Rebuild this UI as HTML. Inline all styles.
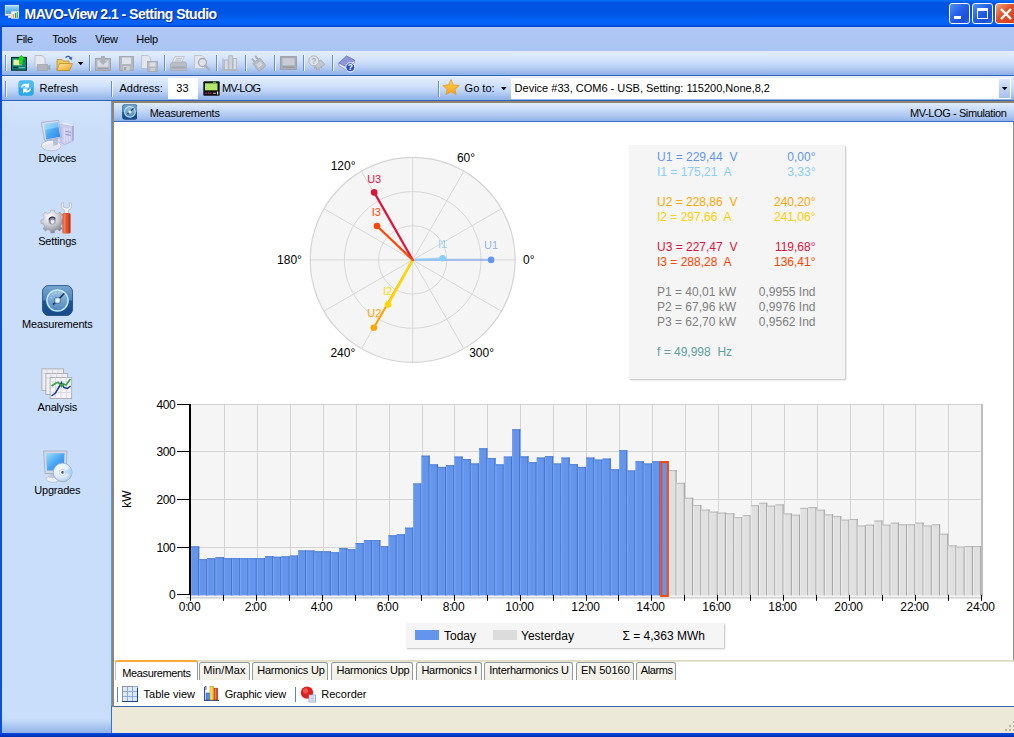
<!DOCTYPE html>
<html><head><meta charset="utf-8"><title>MAVO-View 2.1 - Setting Studio</title>
<style>
html,body{margin:0;padding:0;}
body{width:1014px;height:737px;overflow:hidden;position:relative;background:#fff;font-family:"Liberation Sans",sans-serif;font-size:11px;color:#000;}
.abs{position:absolute;}
.t{position:absolute;white-space:pre;line-height:14px;}
#title{left:0;top:0;width:1014px;height:27px;background:linear-gradient(to bottom,#0a74fa 0px,#0462ee 1.5px,#0054e3 3px,#0054e3 12px,#0059ec 16px,#0362f8 20px,#0461f6 24.5px,#0050dc 25.6px,#0040c4 27px);}
#title .cap{left:24.5px;top:5.5px;font:bold 14px "Liberation Sans",sans-serif;color:#fff;text-shadow:1px 1px 0 #0a2a8a;line-height:17px;letter-spacing:-0.53px;}
#menubar{left:0;top:27px;width:1014px;height:24px;background:linear-gradient(to bottom,#b1c9f6 0,#aac4f3 100%);}
#menubar .t{top:5px;letter-spacing:-0.3px;margin-left:0.3px}
#tb1{left:2px;top:50.9px;width:1012px;height:24.8px;background:linear-gradient(to bottom,#e2edfd 0,#dbe8fc 5px,#cfe0fa 10px,#b9d0f5 16px,#9dbcec 21px,#8eb1e8 23.8px,#3464b8 24px,#3060b0 24.8px);}
#tb2{left:2px;top:75.7px;width:1012px;height:25.3px;background:linear-gradient(to bottom,#eef5fe 0,#e2edfd 1px,#dbe8fc 5px,#cfe0fa 10px,#b9d0f5 16px,#9dbcec 21px,#8eb1e8 24px,#3464b8 24.2px,#3060b0 25.3px);}
#lborder{left:0;top:27px;width:2px;height:710px;background:#0a50e0;}
#sidebar{left:2px;top:100.7px;width:109px;height:633px;background:linear-gradient(to bottom,#d2e3fb 0,#cadefa 30px,#c9defa 618px,#a9c5f0 626px,#8fb2e8 632px);}
#sidebar .t{width:109px;text-align:center;left:0.8px;letter-spacing:-0.2px;}
#split{left:111px;top:100.7px;width:2.8px;height:606px;background:linear-gradient(to right,#6a98e0 0,#6a98e0 1.1px,#8c8672 1.1px,#8c8672 100%);}
#hdr{left:113.8px;top:102.8px;width:900.2px;height:19.4px;background:linear-gradient(to bottom,#e1ebfc 0,#cbddf8 6px,#a9c4f0 14px,#8fb1e9 18.1px,#3e6fc4 18.3px,#3564b8 19.4px);}
#content{left:113.8px;top:122.2px;width:899.2px;height:538px;background:#fff;}
#tabs{left:114px;top:660px;width:900px;height:20px;background:#fff;}
.tab{position:absolute;top:662.4px;height:17.6px;background:linear-gradient(to bottom,#f8f7f2,#f1efe6);border:1px solid #919b9c;border-bottom:none;border-radius:2.5px 2.5px 0 0;box-sizing:border-box;font-size:11px;line-height:15px;text-align:center;white-space:pre;letter-spacing:-0.37px;}
#btb{left:114px;top:680px;width:900px;height:26px;background:#fff;}
#status{left:112px;top:707px;width:902px;height:26px;background:#ece9d8;}
#bborder{left:0;top:732.5px;width:1014px;height:4.5px;background:linear-gradient(to bottom,#0a48e0,#0030b0);}
svg text.ax{font:12px "Liberation Sans",sans-serif;fill:#000;}
svg text.pl{font:11px "Liberation Sans",sans-serif;}
#info{left:629px;top:145px;width:216px;height:234px;background:#f5f5f5;box-shadow:1px 1px 1.5px #c0c0c0;}
#info .t{font-size:12px;line-height:15px;}
#info .l{left:28px;}
#info .r{right:29.5px;text-align:right;}
#legend{left:406px;top:623px;width:318px;height:25px;background:#f5f5f5;box-shadow:1px 1px 1.5px #c0c0c0;}
#legend .t{font-size:12px;top:5.5px;}
#tb1 svg{margin-top:0.7px}
.sep{position:absolute;width:1px;background:#6a8ccc;box-shadow:1px 0 0 #f0f6ff;}
.wb{position:absolute;top:3px;width:21px;height:21px;border-radius:3px;box-sizing:border-box;border:1px solid #fff;}
</style></head><body>
<div class="abs" id="title">
  <svg class="abs" style="left:0px;top:0px" width="24" height="24" viewBox="0 0 24 24">
    <defs><linearGradient id="tis" x1="0" y1="0" x2="0" y2="1"><stop offset="0" stop-color="#a8dcf8"/><stop offset=".45" stop-color="#6cbcf0"/><stop offset="1" stop-color="#3a96dc"/></linearGradient></defs>
    <rect x="4.9" y="4.9" width="14" height="10.8" fill="#f6efdc"/>
    <rect x="5.5" y="5.5" width="13" height="8.3" fill="url(#tis)"/>
    <rect x="8.1" y="15.7" width="3" height="2.2" fill="#f0ead8"/>
    <rect x="11.2" y="11.2" width="7.7" height="7.5" fill="#f4f0e0"/>
    <rect x="12.8" y="13.8" width="1.3" height="4.1" fill="#f5a818"/><rect x="14.9" y="13" width="1.3" height="4.9" fill="#2a8ae0"/><rect x="16.7" y="12" width="1.3" height="5.9" fill="#58b848"/>
  </svg>
  <div class="t cap">MAVO-View 2.1 - Setting Studio</div>
  <div class="wb" style="left:949px;background:linear-gradient(135deg,#4f8ffa,#2560e6 45%,#1a4fd6 75%,#2a66ea)"><div class="abs" style="left:4px;top:12px;width:7px;height:3px;background:#fff"></div></div>
  <div class="wb" style="left:972px;background:linear-gradient(135deg,#4f8ffa,#2560e6 45%,#1a4fd6 75%,#2a66ea)"><div class="abs" style="left:4px;top:4px;width:11px;height:11px;box-sizing:border-box;border:1px solid #fff;border-top:3px solid #fff"></div></div>
  <div class="wb" style="left:995px;background:linear-gradient(135deg,#f0a27e,#e0512a 45%,#d2401a)"><svg class="abs" style="left:3px;top:3px" width="14" height="14"><path d="M2 2L12 12M12 2L2 12" stroke="#fff" stroke-width="2.4"/></svg></div>
</div>
<div class="abs" id="menubar">
  <div class="t" style="left:16px">File</div>
  <div class="t" style="left:52px">Tools</div>
  <div class="t" style="left:95px">View</div>
  <div class="t" style="left:136px">Help</div>
</div>

<svg width="0" height="0" style="position:absolute"><defs>
<linearGradient id="gg" x1="0" y1="0" x2="1" y2="1"><stop offset="0" stop-color="#dfe3ea"/><stop offset="1" stop-color="#a9adb6"/></linearGradient>
<linearGradient id="scr" x1="0" y1="0" x2="1" y2="1"><stop offset="0" stop-color="#9fdcff"/><stop offset=".5" stop-color="#4aa8f4"/><stop offset="1" stop-color="#2f86e0"/></linearGradient>
<linearGradient id="mb" x1="0" y1="0" x2="0" y2="1"><stop offset="0" stop-color="#7aa6cf"/><stop offset=".48" stop-color="#4a84bc"/><stop offset=".52" stop-color="#1d5596"/><stop offset="1" stop-color="#174a88"/></linearGradient>
<linearGradient id="mc" x1="0" y1="0" x2="0" y2="1"><stop offset="0" stop-color="#9cc0de"/><stop offset="1" stop-color="#4f86bd"/></linearGradient>
<radialGradient id="cd" cx=".4" cy=".35" r=".7"><stop offset="0" stop-color="#ffffff"/><stop offset=".6" stop-color="#dcecfb"/><stop offset="1" stop-color="#a8c4e4"/></radialGradient>
<radialGradient id="gear" cx=".38" cy=".3" r=".75"><stop offset="0" stop-color="#ffffff"/><stop offset=".45" stop-color="#d2d2da"/><stop offset="1" stop-color="#7c7c8a"/></radialGradient>
<linearGradient id="fold" x1="0" y1="0" x2="1" y2="1"><stop offset="0" stop-color="#ffe9a0"/><stop offset="1" stop-color="#e9a227"/></linearGradient>
<linearGradient id="star" x1="0" y1="0" x2="0" y2="1"><stop offset="0" stop-color="#ffd84a"/><stop offset="1" stop-color="#f0a020"/></linearGradient>
</defs></svg><div class="abs" id="tb1">
<div class="sep" style="left:3px;top:4px;height:16px"></div>
<svg class="abs" style="left:9px;top:3px" width="16" height="17" viewBox="0 0 16 17">
  <rect x="0.5" y="2.4" width="15" height="12.8" fill="#12857a" stroke="#04201c"/>
  <rect x="2.4" y="4.6" width="8.5" height="5.6" fill="#e8f0a0"/>
  <rect x="2" y="11.8" width="5" height="1.4" fill="#04302c"/><rect x="8" y="12.2" width="6" height="1" fill="#6ac0b0"/>
  <path d="M10.3 0.3L14.2 4.6H12V9.2H8.6V4.6H6.4Z" fill="#18e018" stroke="#0a9a10" stroke-width=".5"/>
</svg>
<svg class="abs" style="left:32px;top:3px" width="17" height="17" viewBox="0 0 17 17">
  <path d="M1 .5H8L11 3.5V12H1Z" fill="#e6e9ef" stroke="#b4b8c0" stroke-width=".8"/>
  <rect x="3.5" y="9.5" width="10" height="6" fill="#b0b4bc" stroke="#9a9ea8" stroke-width=".6"/><path d="M13.5 11L16.3 9.8V15.4L13.5 14.2Z" fill="#a4a8b0"/>
</svg>
<svg class="abs" style="left:54px;top:3px" width="18" height="17" viewBox="0 0 18 17">
  <path d="M1 4.5H6L7.5 6H13V15.5H1Z" fill="#f0c860" stroke="#b88820" stroke-width=".7"/>
  <path d="M3.5 8.5H16.5L13.5 15.5H1Z" fill="url(#fold)" stroke="#b88820" stroke-width=".7"/>
  <path d="M9.5 2.6C11.5 .8 14 1.2 15 3.4" fill="none" stroke="#3a62b0" stroke-width="1.3"/><path d="M16.4 1.8L15.6 5.2L12.8 3.4Z" fill="#3a62b0"/>
</svg>
<svg class="abs" style="left:76px;top:10px" width="6" height="4"><path d="M0 0H5.4L2.7 3.2Z" fill="#000"/></svg>
<div class="sep" style="left:87px;top:4px;height:16px"></div>
<svg class="abs" style="left:93px;top:4px" width="16" height="15" viewBox="0 0 16 15">
  <rect x=".5" y="2.5" width="15" height="12" fill="#b3b7bf" stroke="#a0a4ad"/><rect x="2.5" y="4.2" width="11" height="6.5" fill="#d9dce3"/>
  <path d="M6 0H10V4.5H12.5L8 9L3.5 4.5H6Z" fill="#adb1ba"/><rect x="2.5" y="12" width="11" height="1.2" fill="#9a9ea8"/>
</svg>
<svg class="abs" style="left:117px;top:4px" width="15" height="15" viewBox="0 0 15 15">
  <rect x=".5" y=".5" width="14" height="14" fill="#b3b7bf" stroke="#a4a8b0"/><rect x="3" y="1.5" width="9" height="6.5" fill="#dfe2e8"/><rect x="4" y="10" width="7" height="4.5" fill="#c9ccd4"/><rect x="5" y="11" width="2" height="3" fill="#a4a8b0"/>
</svg>
<svg class="abs" style="left:139px;top:3px" width="17" height="17" viewBox="0 0 17 17">
  <path d="M.5 .5H7L9.5 3V13.5H.5Z" fill="#e3e6ec" stroke="#b8bcc4" stroke-width=".8"/>
  <rect x="6.5" y="6.5" width="10" height="10" fill="#b3b7bf" stroke="#a4a8b0" stroke-width=".8"/><rect x="8.5" y="7.5" width="6" height="4" fill="#dcdfe6"/><rect x="9.5" y="13" width="4.5" height="3" fill="#c9ccd4"/>
</svg>
<div class="sep" style="left:162px;top:4px;height:16px"></div>
<svg class="abs" style="left:168px;top:4px" width="17" height="16" viewBox="0 0 17 16">
  <path d="M5 .5H14.5L11.5 6.5H2Z" fill="#e3e6ec" stroke="#b8bcc4" stroke-width=".7"/>
  <path d="M.5 8L2.5 6H15.5L16.5 8V14.5H.5Z" fill="#b9bdc5" stroke="#a4a8b0" stroke-width=".7"/><rect x="1.5" y="10.5" width="14" height="2" fill="#a2a6af"/><path d="M6 2.5H12M5.3 4.2H11" stroke="#b0b4bc" stroke-width=".7"/>
</svg>
<svg class="abs" style="left:192px;top:3px" width="16" height="17" viewBox="0 0 16 17">
  <path d="M.5 .5H8L10.5 3V13.5H.5Z" fill="#e3e6ec" stroke="#bcc0c8" stroke-width=".8"/>
  <circle cx="8.5" cy="7.5" r="4" fill="#dfe3ea" stroke="#a8acb5" stroke-width="1.3"/><path d="M11.3 10.5L15 14.6" stroke="#a8acb5" stroke-width="2.2" stroke-linecap="round"/>
</svg>
<div class="sep" style="left:214px;top:4px;height:16px"></div>
<svg class="abs" style="left:220px;top:3px" width="17" height="17" viewBox="0 0 17 17">
  <path d="M1 3.5V15.5H15.5" fill="none" stroke="#b0b4bc" stroke-width="1.2"/>
  <rect x="2.5" y="5" width="3.6" height="9.5" fill="#d9dce3" stroke="#adb1ba" stroke-width=".8"/><rect x="6.8" y=".8" width="3.6" height="13.7" fill="#cfd2da" stroke="#adb1ba" stroke-width=".8"/><rect x="11.1" y="3.5" width="3.6" height="11" fill="#d9dce3" stroke="#adb1ba" stroke-width=".8"/>
</svg>
<div class="sep" style="left:243px;top:4px;height:16px"></div>
<svg class="abs" style="left:248px;top:3px" width="17" height="17" viewBox="0 0 17 17">
  <g transform="rotate(-38 8.5 8.5)"><rect x="4" y="5" width="9" height="10" rx="1" fill="#b9bdc5" stroke="#a2a6af" stroke-width=".8"/><rect x="5.5" y=".5" width="1.8" height="5" fill="#a8acb5"/><rect x="9.7" y=".5" width="1.8" height="5" fill="#a8acb5"/><rect x="6" y="8" width="5" height="4" fill="#d3d6dd"/></g>
</svg>
<div class="sep" style="left:272px;top:4px;height:16px"></div>
<svg class="abs" style="left:277.5px;top:4.5px" width="17" height="14" viewBox="0 0 17 14">
  <rect x=".6" y=".6" width="15.8" height="12.8" fill="#a9adb6" stroke="#9a9ea8" stroke-width="1"/><rect x="2.5" y="2.3" width="12" height="7" fill="#c9ccd4"/><rect x="2.5" y="10.6" width="12" height="1.2" fill="#9297a0"/>
</svg>
<div class="sep" style="left:301px;top:4px;height:16px"></div>
<svg class="abs" style="left:306px;top:3px" width="18" height="18" viewBox="0 0 18 18">
  <path d="M5 8L13 5L17 9.5L9 14.5Z" fill="#c3c6ce" stroke="#a4a8b0" stroke-width=".7"/><path d="M6 11.5L7 14M8 12.5L9 15.5M10.5 13L11.5 15.5M13 11.5L14 13.5" stroke="#a4a8b0" stroke-width="1"/>
  <circle cx="5.8" cy="5.8" r="5" fill="#dfe2e8" stroke="#adb1ba" stroke-width=".9"/><text x="5.8" y="8.8" text-anchor="middle" font-family="Liberation Sans,sans-serif" font-size="8.5" font-weight="bold" fill="#adb1ba">?</text>
</svg>
<div class="sep" style="left:330px;top:4px;height:16px"></div>
<svg class="abs" style="left:335.5px;top:3px" width="18" height="18" viewBox="0 0 18 18">
  <path d="M.8 8L8.5 1L16.5 5L9 12.5Z" fill="#8f96d8" stroke="#5a62b0" stroke-width=".7"/><path d="M.8 8V10.5L9 15.5L16.5 7.5V5L9 12.5Z" fill="#e8eaf8" stroke="#6a72b8" stroke-width=".6"/>
  <circle cx="12.3" cy="12.3" r="4.6" fill="#2a50c8" stroke="#fff" stroke-width="1"/><text x="12.3" y="15.3" text-anchor="middle" font-family="Liberation Sans,sans-serif" font-size="8.5" font-weight="bold" fill="#fff">?</text>
</svg>
</div>
<div class="abs" id="tb2">
<div class="sep" style="left:3px;top:5px;height:16px"></div>
<svg class="abs" style="left:15.8px;top:4.1px" width="16.2" height="16.2" viewBox="0 0 17 17">
  <rect x=".5" y=".5" width="16" height="16" rx="3.2" fill="#2aa8e8"/><rect x=".5" y=".5" width="16" height="8" rx="3.2" fill="#5cc4f4" opacity=".7"/>
  <path d="M3.2 8C3.6 4.6 7 3 10 4.4L11.6 2.8V8H6.4L8.2 6.2C6.6 5.6 5 6.4 4.8 8Z" fill="#fff"/>
  <path d="M13.8 9C13.4 12.4 10 14 7 12.6L5.4 14.2V9H10.6L8.8 10.8C10.4 11.4 12 10.6 12.2 9Z" fill="#fff"/>
</svg>
<div class="t" style="left:37.5px;top:5px">Refresh</div>
<div class="sep" style="left:109px;top:5px;height:16px"></div>
<div class="t" style="left:117.5px;top:5px">Address:</div>
<div class="abs" style="left:166px;top:2.3px;width:30px;height:21px;background:#fff"></div>
<div class="t" style="left:174.3px;top:5px">33</div>
<svg class="abs" style="left:201px;top:5px" width="17" height="15" viewBox="0 0 17 15">
  <rect x=".3" y=".3" width="16.4" height="14.4" rx="1" fill="#101010"/><rect x="2" y="2.3" width="12.5" height="7" fill="#b4e66e"/><rect x="10" y=".8" width="3" height="1" fill="#40e040"/>
  <rect x="2.5" y="11.6" width="1.3" height="1.3" fill="#e02080"/><rect x="4.8" y="11.6" width="1.3" height="1.3" fill="#e02080"/><rect x="7.1" y="11.6" width="1.3" height="1.3" fill="#e02080"/><rect x="10" y="11.8" width="3" height=".9" fill="#c8c8c8"/><rect x="14" y="10.5" width="1.2" height="3" fill="#e8e8e8"/>
</svg>
<div class="t" style="left:220px;top:5px;letter-spacing:-0.73px">MV-LOG</div>
<div class="sep" style="left:435.6px;top:5px;height:16px"></div>
<svg class="abs" style="left:440px;top:3.5px" width="18" height="16" viewBox="0 0 18 16">
  <path d="M9 .6L11.4 5.9L17.2 6.5L12.9 10.3L14.1 15.6L9 12.8L3.9 15.6L5.1 10.3L.8 6.5L6.6 5.9Z" fill="url(#star)" stroke="#e8951c" stroke-width=".8" stroke-linejoin="round"/>
</svg>
<div class="t" style="left:462.6px;top:5px">Go to:</div>
<svg class="abs" style="left:498.6px;top:11px" width="6" height="4"><path d="M0 0H5.6L2.8 3.2Z" fill="#000"/></svg>
<div class="abs" style="left:509px;top:2.3px;width:500px;height:21px;background:#fff"></div>
<div class="t" style="left:512.6px;top:5px">Device #33, COM6 - USB, Setting: 115200,None,8,2</div>
<div class="abs" style="left:997px;top:3px;width:11px;height:19px;background:linear-gradient(to bottom,#dbe7fb,#a4c0ee)"></div>
<svg class="abs" style="left:1000px;top:11px" width="6" height="4"><path d="M0 0H5.4L2.7 3.2Z" fill="#000"/></svg>
</div>
<div class="abs" id="lborder"></div>
<div class="abs" id="sidebar">
<!-- Devices -->
<svg class="abs" style="left:38.7px;top:19.1px" width="34" height="33" viewBox="0 0 34 33">
  <path d="M19.9 4.1L31.7 6.1V21.2L23.6 24.8L19.9 22.8Z" fill="#cbcbf0" stroke="#a3a1d2" stroke-width=".5"/>
  <path d="M19.9 4.1L24.5 2.6L32.5 5.3L31.7 6.1Z" fill="#ececfb"/><path d="M31.7 6.1L32.5 5.3V20.3L31.7 21.2Z" fill="#8f8cc0"/>
  <path d="M23.3 7.5V22.5M26 8V21.5M28.7 8.5V20.5" stroke="#e3e3f8" stroke-width="1"/>
  <path d="M24.5 11.5L30 12.3M24.5 14.5L30 15.3" stroke="#8e8cc8" stroke-width="1.1"/>
  <ellipse cx="10.2" cy="25.6" rx="9.8" ry="5.2" fill="#f4f5fa" stroke="#a9adc4" stroke-width=".7"/>
  <ellipse cx="10.2" cy="26.6" rx="8" ry="3.4" fill="#dcdfec" opacity=".7"/>
  <path d="M11.8 18.3L16.7 17.5L17.1 24.4L12.2 25.8Z" fill="#b9bedb"/>
  <path d="M0.2 2.4L17.5 0.4L20.3 17.5L3.7 20.7Z" fill="#d9deea" stroke="#9ba2bf" stroke-width=".7"/>
  <path d="M3.3 4.1L16.8 2.3L19.3 16.7L5.1 19.4Z" fill="url(#scr)"/>
  <path d="M3.3 4.1L16.8 2.3L17.6 7L4 10Z" fill="#b5e6ff" opacity=".45"/>
</svg>
<div class="t" style="top:49.9px">Devices</div>
<!-- Settings -->
<svg class="abs" style="left:38px;top:100px" width="34" height="34" viewBox="0 0 34 34">
  <g transform="translate(12.6,20.3) scale(0.9)">
    <path d="M-2 -12.5H2L2.8 -9.6L5.6 -8.4L8.2 -10.2L10.9 -7.4L9.2 -4.9L10.2 -2.2L13 -1.5V2.3L10.2 3L9 5.6L10.6 8.2L7.8 10.9L5.3 9.2L2.6 10.3L2 13H-2L-2.7 10.3L-5.4 9.2L-7.9 10.9L-10.7 8.2L-9.1 5.6L-10.2 3L-13 2.3V-1.5L-10.2 -2.2L-9.2 -4.9L-10.9 -7.4L-8.2 -10.2L-5.6 -8.4L-2.8 -9.6Z" fill="url(#gear)" stroke="#9a9aa6" stroke-width=".5"/>
    <circle cx="-.5" cy="-.5" r="4" fill="#8a8c9c"/><circle cx="0" cy="0.6" r="2.3" fill="#e8e8f0"/><path d="M-4 -2A4 4 0 0 1 3 -3" stroke="#2a2a60" stroke-width="1.4" fill="none"/>
  </g>
  <g transform="translate(-1.6,0.6)"><path d="M23 1.5V6.5L26 8.5V12H30V8.5L33 6.5V1.5L31 1V5.5L28 6.5L25 5.5V1Z" fill="#f0f0f4" stroke="#a8a8b4" stroke-width=".6"/>
  <rect x="24" y="11.5" width="8" height="20.5" rx="1.5" fill="#e2512a"/><rect x="25" y="12" width="2.2" height="19.5" fill="#f08868" opacity=".8"/><rect x="30" y="12" width="2" height="19.5" fill="#b43014" opacity=".8"/></g>
</svg>
<div class="t" style="top:132.9px">Settings</div>
<!-- Measurements -->
<svg class="abs" style="left:39.5px;top:184.5px" width="31" height="31" viewBox="0 0 31 31">
  <rect x=".4" y=".4" width="30.2" height="30.2" rx="6.5" fill="url(#mb)" stroke="#154480" stroke-width=".8"/>
  <circle cx="15.5" cy="15.5" r="10.6" fill="url(#mc)" stroke="#bfe9fb" stroke-width="1.5"/>
  <path d="M8.5 12.5L9.6 13M10.5 9.5L11.4 10.3M13.5 7.6L13.9 8.7M17 7.4L16.8 8.5" stroke="#eef6ff" stroke-width=".8"/>
  <path d="M11.6 19.2L21.8 9" stroke="#17325e" stroke-width="1.7" stroke-linecap="round"/>
  <rect x="12.8" y="12.8" width="5.4" height="5.4" rx="1" fill="#e6f6ff" stroke="#2a5a94" stroke-width=".8"/>
</svg>
<div class="t" style="top:215.9px">Measurements</div>
<!-- Analysis -->
<svg class="abs" style="left:39px;top:267px" width="33" height="32" viewBox="0 0 33 32">
  <g stroke="#a2a2a8" stroke-width=".8">
  <rect x=".9" y=".9" width="21.6" height="21.4" fill="#eeeef2"/><path d="M.9 5.5H22.5M6 .9V22M11.5 .9V22M17 .9V22" stroke="#cfcfd8"/>
  <rect x="4.9" y="5.4" width="21.8" height="21" fill="#f0f0f4"/><path d="M4.9 10H26.7M10 5.4V26M15.5 5.4V26M21 5.4V26" stroke="#cfcfd8"/>
  <rect x="9.1" y="9.4" width="21.6" height="21.2" fill="#f4f4f8"/></g>
  <path d="M9.1 14H30.7M9.1 19H30.7M9.1 24.5H30.7M14.5 9.4V30.5M20 9.4V30.5M25.5 9.4V30.5" stroke="#d4d4de" stroke-width=".8"/>
  <path d="M10.5 28L14.5 25L18 19L20.5 14.5L23 19.5L26.5 20.5L29.5 18" fill="none" stroke="#1c3e8c" stroke-width="1.5"/>
  <path d="M10.5 18L15 15L17.5 14.5L20.5 18.5L22.5 16L25 17L29.5 11" fill="none" stroke="#3aa040" stroke-width="1.6"/>
</svg>
<div class="t" style="top:298.9px">Analysis</div>
<!-- Upgrades -->
<svg class="abs" style="left:40px;top:349px" width="34" height="34" viewBox="0 0 34 34">
  <ellipse cx="11" cy="29" rx="7" ry="3.3" fill="#eceef4" stroke="#a8acc0" stroke-width=".6"/><path d="M8 22H14L14.5 28H7.5Z" fill="#c4c8dc"/>
  <path d="M1.5 1H25L24 23.5H3Z" fill="#d4d8e4" stroke="#a0a4b8" stroke-width=".7"/>
  <path d="M4 3.2H22.5L21.8 20.5H5Z" fill="url(#scr)"/>
  <g transform="translate(-2,0)"><circle cx="22.6" cy="22.4" r="9.4" fill="url(#cd)" stroke="#9aa8c0" stroke-width=".8"/><circle cx="22.6" cy="22.4" r="3.3" fill="#f4f8ff" stroke="#b8c4d8" stroke-width=".6"/><circle cx="22.6" cy="22.4" r="1.4" fill="#5a5a68"/>
  <path d="M22.6 22.4L31 17.8A9.6 9.6 0 0 1 31.7 25Z" fill="#a8d4f4" opacity=".7"/></g>
</svg>
<div class="t" style="top:381.9px">Upgrades</div>
</div>
<div class="abs" id="split"></div>
<div class="abs" style="left:112px;top:101.3px;width:902px;height:1.5px;background:#8c8672"></div><div class="abs" id="hdr">
<svg class="abs" style="left:7.9px;top:1.4px" width="15.8" height="15.8" viewBox="0 0 31 31">
  <rect x=".4" y=".4" width="30.2" height="30.2" rx="6.5" fill="url(#mb)" stroke="#154480" stroke-width="1"/>
  <circle cx="15.5" cy="15.5" r="10.6" fill="url(#mc)" stroke="#bfe9fb" stroke-width="2"/>
  <path d="M11.6 19.2L21.8 9" stroke="#17325e" stroke-width="2.4" stroke-linecap="round"/>
  <rect x="12.8" y="12.8" width="5.4" height="5.4" rx="1" fill="#e6f6ff"/>
</svg>
<div class="t" style="left:35.9px;top:2.9px;letter-spacing:-0.23px">Measurements</div>
<div class="t" style="right:7.6px;top:2.9px;letter-spacing:-0.39px">MV-LOG - Simulation</div>
</div>
<div class="abs" id="content"></div><div class="abs" style="left:1013px;top:122px;width:1px;height:539px;background:#8c9088"></div>
<div class="abs" id="tabs">
<div class="abs" style="left:0;top:0;width:900px;height:2px;background:linear-gradient(to bottom,#d8d4c0,#ece9d8)"></div>
</div>
<div class="abs" style="left:114.6px;top:660.2px;width:83.8px;height:20.8px;background:#fdfdfe;border:1px solid #919b9c;border-left-color:#c0c4c8;border-bottom:none;border-top:2px solid #f9a83a;border-radius:3px 3px 0 0;box-sizing:border-box"></div>
<div class="t" style="left:122.3px;top:666.1px;font-size:11px;letter-spacing:-.37px">Measurements</div>

<div class="tab" style="left:199.3px;width:50.3px;letter-spacing:0.1px;text-indent:-0.2px">Min/Max</div>
<div class="tab" style="left:252px;width:76px;letter-spacing:-0.19px;text-indent:1.8px">Harmonics Up</div>
<div class="tab" style="left:331.4px;width:81.6px;letter-spacing:-0.21px;text-indent:1.6px">Harmonics Upp</div>
<div class="tab" style="left:415.8px;width:65.8px;letter-spacing:-0.27px;text-indent:1.1px">Harmonics I</div>
<div class="tab" style="left:483.8px;width:89.7px;letter-spacing:-0.27px;text-indent:0.6px">Interharmonics U</div>
<div class="tab" style="left:575.7px;width:58px;letter-spacing:0px;text-indent:1.4px">EN 50160</div>
<div class="tab" style="left:635.7px;width:40px;letter-spacing:-0.39px;text-indent:2.0px">Alarms</div>
<div class="abs" id="btb">
<div class="abs" style="left:3px;top:7px;width:1px;height:15px;background:#5a82d0"></div>
<svg class="abs" style="left:8px;top:6px" width="16" height="16" viewBox="0 0 16 16">
  <rect x="0" y="0" width="16" height="16" fill="#8ea9dc"/>
  <g fill="#dbe9fc"><rect x="1" y="1" width="4" height="4"/><rect x="6" y="1" width="4" height="4"/><rect x="11" y="1" width="4" height="4"/><rect x="1" y="6" width="4" height="4"/><rect x="6" y="6" width="4" height="4"/><rect x="11" y="6" width="4" height="4"/><rect x="1" y="11" width="4" height="4"/><rect x="6" y="11" width="4" height="4"/><rect x="11" y="11" width="4" height="4"/></g>
  <path d="M0 .5H10.5M.5 0V15" stroke="#8f9299" stroke-width="1"/>
  <path d="M0 15.5H16M15.5 2V16" stroke="#1a4480" stroke-width="1"/>
</svg>
<div class="t" style="left:29.6px;top:7.1px">Table view</div>
<svg class="abs" style="left:88.6px;top:5.4px" width="17" height="17" viewBox="0 0 17 17">
  <path d="M1.6 2V15.4H16" fill="none" stroke="#2a4a90" stroke-width="1.1"/>
  <path d="M1.6 2L3 1V5" fill="none" stroke="#2a4a90" stroke-width=".8"/>
  <rect x="3.2" y="8" width="3.2" height="7" fill="#4a8cf0" stroke="#2858b8" stroke-width=".6"/><rect x="7" y="1.5" width="3.6" height="13.5" fill="#f6c428" stroke="#b88a10" stroke-width=".6"/><rect x="11.2" y="3.2" width="3.4" height="11.8" fill="#e64628" stroke="#a02810" stroke-width=".6"/>
  <rect x="7.6" y="2" width="1" height="12.5" fill="#fde88a"/><rect x="11.8" y="3.8" width="1" height="10.8" fill="#f68a70"/>
</svg>
<div class="t" style="left:110.7px;top:7.1px;letter-spacing:-0.19px">Graphic view</div>
<div class="abs" style="left:181px;top:7px;width:1px;height:15px;background:#5a82d0"></div>
<svg class="abs" style="left:186px;top:5px" width="17" height="18" viewBox="0 0 17 18">
  <circle cx="7" cy="7.6" r="6.2" fill="#e0201c"/><circle cx="5.6" cy="5.8" r="2.6" fill="#f46860" opacity=".75"/>
  <rect x="9" y="10" width="6.6" height="7" fill="#f6f8fc" stroke="#8a9ac8" stroke-width=".8"/><path d="M10.3 12H14.3M10.3 13.6H14.3M10.3 15.2H14.3" stroke="#8aa0d8" stroke-width=".7"/>
</svg>
<div class="t" style="left:207.3px;top:7.1px">Recorder</div>
</div><div class="abs" style="left:114px;top:706px;width:900px;height:1.4px;background:#3a62a8"></div>
<div class="abs" id="status"><svg class="abs" style="right:-1.5px;top:12px" width="13" height="13"><g fill="#b8b4a0"><rect x="10" y="2" width="2" height="2"/><rect x="6" y="6" width="2" height="2"/><rect x="10" y="6" width="2" height="2"/><rect x="2" y="10" width="2" height="2"/><rect x="6" y="10" width="2" height="2"/><rect x="10" y="10" width="2" height="2"/></g></svg></div>
<div class="abs" style="left:111px;top:706px;width:1px;height:27px;background:#3a6ed0"></div><div class="abs" id="bborder"></div>

<svg class="abs" style="left:0;top:0" width="1014" height="737" viewBox="0 0 1014 737">
<circle cx="412.7" cy="259.95" r="102.5" fill="#f5f5f5" stroke="#d4d4d4" stroke-width="1.2"/>
<circle cx="412.7" cy="259.95" r="34.17" fill="none" stroke="#d8d8d8" stroke-width="1"/>
<circle cx="412.7" cy="259.95" r="68.33" fill="none" stroke="#d8d8d8" stroke-width="1"/>
<line x1="412.7" y1="259.95" x2="515.2" y2="259.9" stroke="#d8d8d8" stroke-width="1"/>
<line x1="412.7" y1="259.95" x2="501.5" y2="208.7" stroke="#d8d8d8" stroke-width="1"/>
<line x1="412.7" y1="259.95" x2="463.9" y2="171.2" stroke="#d8d8d8" stroke-width="1"/>
<line x1="412.7" y1="259.95" x2="412.7" y2="157.4" stroke="#d8d8d8" stroke-width="1"/>
<line x1="412.7" y1="259.95" x2="361.4" y2="171.2" stroke="#d8d8d8" stroke-width="1"/>
<line x1="412.7" y1="259.95" x2="323.9" y2="208.7" stroke="#d8d8d8" stroke-width="1"/>
<line x1="412.7" y1="259.95" x2="310.2" y2="259.9" stroke="#d8d8d8" stroke-width="1"/>
<line x1="412.7" y1="259.95" x2="323.9" y2="311.2" stroke="#d8d8d8" stroke-width="1"/>
<line x1="412.7" y1="259.95" x2="361.4" y2="348.7" stroke="#d8d8d8" stroke-width="1"/>
<line x1="412.7" y1="259.95" x2="412.7" y2="362.4" stroke="#d8d8d8" stroke-width="1"/>
<line x1="412.7" y1="259.95" x2="463.9" y2="348.7" stroke="#d8d8d8" stroke-width="1"/>
<line x1="412.7" y1="259.95" x2="501.5" y2="311.2" stroke="#d8d8d8" stroke-width="1"/>
<line x1="412.7" y1="259.95" x2="491.1" y2="259.9" stroke="#6495ed" stroke-width="2.2" stroke-opacity="0.5" stroke-linecap="round"/><circle cx="491.1" cy="259.9" r="3.3" fill="#6495ed"/><text x="491.1" y="249.3" text-anchor="middle" class="pl" fill="#6495ed" fill-opacity="0.7">U1</text>
<line x1="412.7" y1="259.95" x2="442.6" y2="258.2" stroke="#87cefa" stroke-width="2" stroke-opacity="0.7" stroke-linecap="round"/><circle cx="442.6" cy="258.2" r="3.3" fill="#87cefa"/><text x="442.6" y="248.0" text-anchor="middle" class="pl" fill="#87cefa" fill-opacity="0.8999999999999999">I1</text>
<line x1="412.7" y1="259.95" x2="373.8" y2="327.8" stroke="#ffa500" stroke-width="2.1" stroke-opacity="1" stroke-linecap="round"/><circle cx="373.8" cy="327.8" r="3.3" fill="#ffa500"/><text x="374.3" y="317.4" text-anchor="middle" class="pl" fill="#ffa500" fill-opacity="1">U2</text>
<line x1="412.7" y1="259.95" x2="388.1" y2="304.5" stroke="#ffd700" stroke-width="2.4" stroke-opacity="1" stroke-linecap="round"/><circle cx="388.1" cy="304.5" r="3.3" fill="#ffd700"/><text x="387.6" y="294.9" text-anchor="middle" class="pl" fill="#ffd700" fill-opacity="1">I2</text>
<line x1="412.7" y1="259.95" x2="374.2" y2="192.4" stroke="#dc143c" stroke-width="2.2" stroke-opacity="1" stroke-linecap="round"/><circle cx="374.2" cy="192.4" r="3.3" fill="#dc143c"/><text x="374.2" y="182.8" text-anchor="middle" class="pl" fill="#dc143c" fill-opacity="1">U3</text>
<line x1="412.7" y1="259.95" x2="377.0" y2="226.0" stroke="#ff4500" stroke-width="2.2" stroke-opacity="1" stroke-linecap="round"/><circle cx="377.0" cy="226.0" r="3.3" fill="#ff4500"/><text x="376.4" y="215.7" text-anchor="middle" class="pl" fill="#ff4500" fill-opacity="1">I3</text>
<text x="528.7" y="263.6" text-anchor="middle" class="ax">0°</text>
<text x="466" y="162" text-anchor="middle" class="ax">60°</text>
<text x="343.1" y="169.9" text-anchor="middle" class="ax">120°</text>
<text x="289.5" y="263.6" text-anchor="middle" class="ax">180°</text>
<text x="342.8" y="356.9" text-anchor="middle" class="ax">240°</text>
<text x="481.6" y="356.9" text-anchor="middle" class="ax">300°</text>
<rect x="191.0" y="404.0" width="790.0" height="193.0" fill="#f5f5f5"/>
<line x1="224.5" y1="404.0" x2="224.5" y2="595.4" stroke="#d3d3d3" stroke-width="1"/>
<line x1="257.5" y1="404.0" x2="257.5" y2="595.4" stroke="#d3d3d3" stroke-width="1"/>
<line x1="290.5" y1="404.0" x2="290.5" y2="595.4" stroke="#d3d3d3" stroke-width="1"/>
<line x1="323.5" y1="404.0" x2="323.5" y2="595.4" stroke="#d3d3d3" stroke-width="1"/>
<line x1="356.5" y1="404.0" x2="356.5" y2="595.4" stroke="#d3d3d3" stroke-width="1"/>
<line x1="389.5" y1="404.0" x2="389.5" y2="595.4" stroke="#d3d3d3" stroke-width="1"/>
<line x1="422.5" y1="404.0" x2="422.5" y2="595.4" stroke="#d3d3d3" stroke-width="1"/>
<line x1="454.5" y1="404.0" x2="454.5" y2="595.4" stroke="#d3d3d3" stroke-width="1"/>
<line x1="487.5" y1="404.0" x2="487.5" y2="595.4" stroke="#d3d3d3" stroke-width="1"/>
<line x1="520.5" y1="404.0" x2="520.5" y2="595.4" stroke="#d3d3d3" stroke-width="1"/>
<line x1="553.5" y1="404.0" x2="553.5" y2="595.4" stroke="#d3d3d3" stroke-width="1"/>
<line x1="586.5" y1="404.0" x2="586.5" y2="595.4" stroke="#d3d3d3" stroke-width="1"/>
<line x1="619.5" y1="404.0" x2="619.5" y2="595.4" stroke="#d3d3d3" stroke-width="1"/>
<line x1="652.5" y1="404.0" x2="652.5" y2="595.4" stroke="#d3d3d3" stroke-width="1"/>
<line x1="685.5" y1="404.0" x2="685.5" y2="595.4" stroke="#d3d3d3" stroke-width="1"/>
<line x1="718.5" y1="404.0" x2="718.5" y2="595.4" stroke="#d3d3d3" stroke-width="1"/>
<line x1="751.5" y1="404.0" x2="751.5" y2="595.4" stroke="#d3d3d3" stroke-width="1"/>
<line x1="784.5" y1="404.0" x2="784.5" y2="595.4" stroke="#d3d3d3" stroke-width="1"/>
<line x1="817.5" y1="404.0" x2="817.5" y2="595.4" stroke="#d3d3d3" stroke-width="1"/>
<line x1="850.5" y1="404.0" x2="850.5" y2="595.4" stroke="#d3d3d3" stroke-width="1"/>
<line x1="883.5" y1="404.0" x2="883.5" y2="595.4" stroke="#d3d3d3" stroke-width="1"/>
<line x1="915.5" y1="404.0" x2="915.5" y2="595.4" stroke="#d3d3d3" stroke-width="1"/>
<line x1="948.5" y1="404.0" x2="948.5" y2="595.4" stroke="#d3d3d3" stroke-width="1"/>
<line x1="191.0" y1="404.5" x2="981.0" y2="404.5" stroke="#d3d3d3" stroke-width="1"/>
<line x1="191.0" y1="451.5" x2="981.0" y2="451.5" stroke="#d3d3d3" stroke-width="1"/>
<line x1="191.0" y1="499.5" x2="981.0" y2="499.5" stroke="#d3d3d3" stroke-width="1"/>
<line x1="191.0" y1="547.5" x2="981.0" y2="547.5" stroke="#d3d3d3" stroke-width="1"/>
<rect x="981" y="404.0" width="2" height="192.5" fill="#bebebe"/>
<rect x="191.00" y="546.4" width="8.23" height="49.0" fill="#6495ed"/>
<rect x="191.00" y="546.4" width="0.8" height="49.0" fill="#7ca5f1"/>
<rect x="191.00" y="546.4" width="8.23" height="1" fill="#5482d8"/>
<rect x="198.03" y="546.4" width="1.2" height="49.0" fill="#4a75ca"/>
<rect x="199.23" y="559.2" width="8.23" height="36.2" fill="#6495ed"/>
<rect x="199.23" y="559.2" width="0.8" height="36.2" fill="#7ca5f1"/>
<rect x="199.23" y="559.2" width="8.23" height="1" fill="#5482d8"/>
<rect x="206.26" y="559.2" width="1.2" height="36.2" fill="#4a75ca"/>
<rect x="207.46" y="558.2" width="8.23" height="37.2" fill="#6495ed"/>
<rect x="207.46" y="558.2" width="0.8" height="37.2" fill="#7ca5f1"/>
<rect x="207.46" y="558.2" width="8.23" height="1" fill="#5482d8"/>
<rect x="214.50" y="558.2" width="1.2" height="37.2" fill="#4a75ca"/>
<rect x="215.70" y="557.2" width="8.23" height="38.2" fill="#6495ed"/>
<rect x="215.70" y="557.2" width="0.8" height="38.2" fill="#7ca5f1"/>
<rect x="215.70" y="557.2" width="8.23" height="1" fill="#5482d8"/>
<rect x="222.73" y="557.2" width="1.2" height="38.2" fill="#4a75ca"/>
<rect x="223.93" y="558.2" width="8.23" height="37.2" fill="#6495ed"/>
<rect x="223.93" y="558.2" width="0.8" height="37.2" fill="#7ca5f1"/>
<rect x="223.93" y="558.2" width="8.23" height="1" fill="#5482d8"/>
<rect x="230.96" y="558.2" width="1.2" height="37.2" fill="#4a75ca"/>
<rect x="232.16" y="558.2" width="8.23" height="37.2" fill="#6495ed"/>
<rect x="232.16" y="558.2" width="0.8" height="37.2" fill="#7ca5f1"/>
<rect x="232.16" y="558.2" width="8.23" height="1" fill="#5482d8"/>
<rect x="239.19" y="558.2" width="1.2" height="37.2" fill="#4a75ca"/>
<rect x="240.39" y="558.2" width="8.23" height="37.2" fill="#6495ed"/>
<rect x="240.39" y="558.2" width="0.8" height="37.2" fill="#7ca5f1"/>
<rect x="240.39" y="558.2" width="8.23" height="1" fill="#5482d8"/>
<rect x="247.43" y="558.2" width="1.2" height="37.2" fill="#4a75ca"/>
<rect x="248.63" y="558.2" width="8.23" height="37.2" fill="#6495ed"/>
<rect x="248.63" y="558.2" width="0.8" height="37.2" fill="#7ca5f1"/>
<rect x="248.63" y="558.2" width="8.23" height="1" fill="#5482d8"/>
<rect x="255.66" y="558.2" width="1.2" height="37.2" fill="#4a75ca"/>
<rect x="256.86" y="558.2" width="8.23" height="37.2" fill="#6495ed"/>
<rect x="256.86" y="558.2" width="0.8" height="37.2" fill="#7ca5f1"/>
<rect x="256.86" y="558.2" width="8.23" height="1" fill="#5482d8"/>
<rect x="263.89" y="558.2" width="1.2" height="37.2" fill="#4a75ca"/>
<rect x="265.09" y="556.2" width="8.23" height="39.2" fill="#6495ed"/>
<rect x="265.09" y="556.2" width="0.8" height="39.2" fill="#7ca5f1"/>
<rect x="265.09" y="556.2" width="8.23" height="1" fill="#5482d8"/>
<rect x="272.12" y="556.2" width="1.2" height="39.2" fill="#4a75ca"/>
<rect x="273.32" y="556.8" width="8.23" height="38.6" fill="#6495ed"/>
<rect x="273.32" y="556.8" width="0.8" height="38.6" fill="#7ca5f1"/>
<rect x="273.32" y="556.8" width="8.23" height="1" fill="#5482d8"/>
<rect x="280.36" y="556.8" width="1.2" height="38.6" fill="#4a75ca"/>
<rect x="281.56" y="556.4" width="8.23" height="39.0" fill="#6495ed"/>
<rect x="281.56" y="556.4" width="0.8" height="39.0" fill="#7ca5f1"/>
<rect x="281.56" y="556.4" width="8.23" height="1" fill="#5482d8"/>
<rect x="288.59" y="556.4" width="1.2" height="39.0" fill="#4a75ca"/>
<rect x="289.79" y="555.6" width="8.23" height="39.8" fill="#6495ed"/>
<rect x="289.79" y="555.6" width="0.8" height="39.8" fill="#7ca5f1"/>
<rect x="289.79" y="555.6" width="8.23" height="1" fill="#5482d8"/>
<rect x="296.82" y="555.6" width="1.2" height="39.8" fill="#4a75ca"/>
<rect x="298.02" y="550.5" width="8.23" height="44.9" fill="#6495ed"/>
<rect x="298.02" y="550.5" width="0.8" height="44.9" fill="#7ca5f1"/>
<rect x="298.02" y="550.5" width="8.23" height="1" fill="#5482d8"/>
<rect x="305.05" y="550.5" width="1.2" height="44.9" fill="#4a75ca"/>
<rect x="306.25" y="550.5" width="8.23" height="44.9" fill="#6495ed"/>
<rect x="306.25" y="550.5" width="0.8" height="44.9" fill="#7ca5f1"/>
<rect x="306.25" y="550.5" width="8.23" height="1" fill="#5482d8"/>
<rect x="313.28" y="550.5" width="1.2" height="44.9" fill="#4a75ca"/>
<rect x="314.48" y="551.3" width="8.23" height="44.1" fill="#6495ed"/>
<rect x="314.48" y="551.3" width="0.8" height="44.1" fill="#7ca5f1"/>
<rect x="314.48" y="551.3" width="8.23" height="1" fill="#5482d8"/>
<rect x="321.52" y="551.3" width="1.2" height="44.1" fill="#4a75ca"/>
<rect x="322.72" y="551.3" width="8.23" height="44.1" fill="#6495ed"/>
<rect x="322.72" y="551.3" width="0.8" height="44.1" fill="#7ca5f1"/>
<rect x="322.72" y="551.3" width="8.23" height="1" fill="#5482d8"/>
<rect x="329.75" y="551.3" width="1.2" height="44.1" fill="#4a75ca"/>
<rect x="330.95" y="552.3" width="8.23" height="43.1" fill="#6495ed"/>
<rect x="330.95" y="552.3" width="0.8" height="43.1" fill="#7ca5f1"/>
<rect x="330.95" y="552.3" width="8.23" height="1" fill="#5482d8"/>
<rect x="337.98" y="552.3" width="1.2" height="43.1" fill="#4a75ca"/>
<rect x="339.18" y="548.1" width="8.23" height="47.3" fill="#6495ed"/>
<rect x="339.18" y="548.1" width="0.8" height="47.3" fill="#7ca5f1"/>
<rect x="339.18" y="548.1" width="8.23" height="1" fill="#5482d8"/>
<rect x="346.21" y="548.1" width="1.2" height="47.3" fill="#4a75ca"/>
<rect x="347.41" y="549.3" width="8.23" height="46.1" fill="#6495ed"/>
<rect x="347.41" y="549.3" width="0.8" height="46.1" fill="#7ca5f1"/>
<rect x="347.41" y="549.3" width="8.23" height="1" fill="#5482d8"/>
<rect x="354.45" y="549.3" width="1.2" height="46.1" fill="#4a75ca"/>
<rect x="355.65" y="543.0" width="8.23" height="52.4" fill="#6495ed"/>
<rect x="355.65" y="543.0" width="0.8" height="52.4" fill="#7ca5f1"/>
<rect x="355.65" y="543.0" width="8.23" height="1" fill="#5482d8"/>
<rect x="362.68" y="543.0" width="1.2" height="52.4" fill="#4a75ca"/>
<rect x="363.88" y="540.2" width="8.23" height="55.2" fill="#6495ed"/>
<rect x="363.88" y="540.2" width="0.8" height="55.2" fill="#7ca5f1"/>
<rect x="363.88" y="540.2" width="8.23" height="1" fill="#5482d8"/>
<rect x="370.91" y="540.2" width="1.2" height="55.2" fill="#4a75ca"/>
<rect x="372.11" y="540.2" width="8.23" height="55.2" fill="#6495ed"/>
<rect x="372.11" y="540.2" width="0.8" height="55.2" fill="#7ca5f1"/>
<rect x="372.11" y="540.2" width="8.23" height="1" fill="#5482d8"/>
<rect x="379.14" y="540.2" width="1.2" height="55.2" fill="#4a75ca"/>
<rect x="380.34" y="546.2" width="8.23" height="49.2" fill="#6495ed"/>
<rect x="380.34" y="546.2" width="0.8" height="49.2" fill="#7ca5f1"/>
<rect x="380.34" y="546.2" width="8.23" height="1" fill="#5482d8"/>
<rect x="387.38" y="546.2" width="1.2" height="49.2" fill="#4a75ca"/>
<rect x="388.57" y="535.3" width="8.23" height="60.1" fill="#6495ed"/>
<rect x="388.57" y="535.3" width="0.8" height="60.1" fill="#7ca5f1"/>
<rect x="388.57" y="535.3" width="8.23" height="1" fill="#5482d8"/>
<rect x="395.61" y="535.3" width="1.2" height="60.1" fill="#4a75ca"/>
<rect x="396.81" y="534.3" width="8.23" height="61.1" fill="#6495ed"/>
<rect x="396.81" y="534.3" width="0.8" height="61.1" fill="#7ca5f1"/>
<rect x="396.81" y="534.3" width="8.23" height="1" fill="#5482d8"/>
<rect x="403.84" y="534.3" width="1.2" height="61.1" fill="#4a75ca"/>
<rect x="405.04" y="527.7" width="8.23" height="67.7" fill="#6495ed"/>
<rect x="405.04" y="527.7" width="0.8" height="67.7" fill="#7ca5f1"/>
<rect x="405.04" y="527.7" width="8.23" height="1" fill="#5482d8"/>
<rect x="412.07" y="527.7" width="1.2" height="67.7" fill="#4a75ca"/>
<rect x="413.27" y="483.5" width="8.23" height="111.9" fill="#6495ed"/>
<rect x="413.27" y="483.5" width="0.8" height="111.9" fill="#7ca5f1"/>
<rect x="413.27" y="483.5" width="8.23" height="1" fill="#5482d8"/>
<rect x="420.30" y="483.5" width="1.2" height="111.9" fill="#4a75ca"/>
<rect x="421.50" y="455.7" width="8.23" height="139.7" fill="#6495ed"/>
<rect x="421.50" y="455.7" width="0.8" height="139.7" fill="#7ca5f1"/>
<rect x="421.50" y="455.7" width="8.23" height="1" fill="#5482d8"/>
<rect x="428.54" y="455.7" width="1.2" height="139.7" fill="#4a75ca"/>
<rect x="429.74" y="464.4" width="8.23" height="131.0" fill="#6495ed"/>
<rect x="429.74" y="464.4" width="0.8" height="131.0" fill="#7ca5f1"/>
<rect x="429.74" y="464.4" width="8.23" height="1" fill="#5482d8"/>
<rect x="436.77" y="464.4" width="1.2" height="131.0" fill="#4a75ca"/>
<rect x="437.97" y="466.9" width="8.23" height="128.5" fill="#6495ed"/>
<rect x="437.97" y="466.9" width="0.8" height="128.5" fill="#7ca5f1"/>
<rect x="437.97" y="466.9" width="8.23" height="1" fill="#5482d8"/>
<rect x="445.00" y="466.9" width="1.2" height="128.5" fill="#4a75ca"/>
<rect x="446.20" y="465.2" width="8.23" height="130.2" fill="#6495ed"/>
<rect x="446.20" y="465.2" width="0.8" height="130.2" fill="#7ca5f1"/>
<rect x="446.20" y="465.2" width="8.23" height="1" fill="#5482d8"/>
<rect x="453.23" y="465.2" width="1.2" height="130.2" fill="#4a75ca"/>
<rect x="454.43" y="456.6" width="8.23" height="138.8" fill="#6495ed"/>
<rect x="454.43" y="456.6" width="0.8" height="138.8" fill="#7ca5f1"/>
<rect x="454.43" y="456.6" width="8.23" height="1" fill="#5482d8"/>
<rect x="461.47" y="456.6" width="1.2" height="138.8" fill="#4a75ca"/>
<rect x="462.67" y="459.1" width="8.23" height="136.3" fill="#6495ed"/>
<rect x="462.67" y="459.1" width="0.8" height="136.3" fill="#7ca5f1"/>
<rect x="462.67" y="459.1" width="8.23" height="1" fill="#5482d8"/>
<rect x="469.70" y="459.1" width="1.2" height="136.3" fill="#4a75ca"/>
<rect x="470.90" y="463.5" width="8.23" height="131.9" fill="#6495ed"/>
<rect x="470.90" y="463.5" width="0.8" height="131.9" fill="#7ca5f1"/>
<rect x="470.90" y="463.5" width="8.23" height="1" fill="#5482d8"/>
<rect x="477.93" y="463.5" width="1.2" height="131.9" fill="#4a75ca"/>
<rect x="479.13" y="448.3" width="8.23" height="147.1" fill="#6495ed"/>
<rect x="479.13" y="448.3" width="0.8" height="147.1" fill="#7ca5f1"/>
<rect x="479.13" y="448.3" width="8.23" height="1" fill="#5482d8"/>
<rect x="486.16" y="448.3" width="1.2" height="147.1" fill="#4a75ca"/>
<rect x="487.36" y="458.1" width="8.23" height="137.3" fill="#6495ed"/>
<rect x="487.36" y="458.1" width="0.8" height="137.3" fill="#7ca5f1"/>
<rect x="487.36" y="458.1" width="8.23" height="1" fill="#5482d8"/>
<rect x="494.39" y="458.1" width="1.2" height="137.3" fill="#4a75ca"/>
<rect x="495.59" y="464.4" width="8.23" height="131.0" fill="#6495ed"/>
<rect x="495.59" y="464.4" width="0.8" height="131.0" fill="#7ca5f1"/>
<rect x="495.59" y="464.4" width="8.23" height="1" fill="#5482d8"/>
<rect x="502.63" y="464.4" width="1.2" height="131.0" fill="#4a75ca"/>
<rect x="503.83" y="456.6" width="8.23" height="138.8" fill="#6495ed"/>
<rect x="503.83" y="456.6" width="0.8" height="138.8" fill="#7ca5f1"/>
<rect x="503.83" y="456.6" width="8.23" height="1" fill="#5482d8"/>
<rect x="510.86" y="456.6" width="1.2" height="138.8" fill="#4a75ca"/>
<rect x="512.06" y="429.3" width="8.23" height="166.1" fill="#6495ed"/>
<rect x="512.06" y="429.3" width="0.8" height="166.1" fill="#7ca5f1"/>
<rect x="512.06" y="429.3" width="8.23" height="1" fill="#5482d8"/>
<rect x="519.09" y="429.3" width="1.2" height="166.1" fill="#4a75ca"/>
<rect x="520.29" y="456.4" width="8.23" height="139.0" fill="#6495ed"/>
<rect x="520.29" y="456.4" width="0.8" height="139.0" fill="#7ca5f1"/>
<rect x="520.29" y="456.4" width="8.23" height="1" fill="#5482d8"/>
<rect x="527.32" y="456.4" width="1.2" height="139.0" fill="#4a75ca"/>
<rect x="528.52" y="462.2" width="8.23" height="133.2" fill="#6495ed"/>
<rect x="528.52" y="462.2" width="0.8" height="133.2" fill="#7ca5f1"/>
<rect x="528.52" y="462.2" width="8.23" height="1" fill="#5482d8"/>
<rect x="535.56" y="462.2" width="1.2" height="133.2" fill="#4a75ca"/>
<rect x="536.76" y="457.6" width="8.23" height="137.8" fill="#6495ed"/>
<rect x="536.76" y="457.6" width="0.8" height="137.8" fill="#7ca5f1"/>
<rect x="536.76" y="457.6" width="8.23" height="1" fill="#5482d8"/>
<rect x="543.79" y="457.6" width="1.2" height="137.8" fill="#4a75ca"/>
<rect x="544.99" y="456.1" width="8.23" height="139.3" fill="#6495ed"/>
<rect x="544.99" y="456.1" width="0.8" height="139.3" fill="#7ca5f1"/>
<rect x="544.99" y="456.1" width="8.23" height="1" fill="#5482d8"/>
<rect x="552.02" y="456.1" width="1.2" height="139.3" fill="#4a75ca"/>
<rect x="553.22" y="463.5" width="8.23" height="131.9" fill="#6495ed"/>
<rect x="553.22" y="463.5" width="0.8" height="131.9" fill="#7ca5f1"/>
<rect x="553.22" y="463.5" width="8.23" height="1" fill="#5482d8"/>
<rect x="560.25" y="463.5" width="1.2" height="131.9" fill="#4a75ca"/>
<rect x="561.45" y="457.6" width="8.23" height="137.8" fill="#6495ed"/>
<rect x="561.45" y="457.6" width="0.8" height="137.8" fill="#7ca5f1"/>
<rect x="561.45" y="457.6" width="8.23" height="1" fill="#5482d8"/>
<rect x="568.49" y="457.6" width="1.2" height="137.8" fill="#4a75ca"/>
<rect x="569.69" y="464.2" width="8.23" height="131.2" fill="#6495ed"/>
<rect x="569.69" y="464.2" width="0.8" height="131.2" fill="#7ca5f1"/>
<rect x="569.69" y="464.2" width="8.23" height="1" fill="#5482d8"/>
<rect x="576.72" y="464.2" width="1.2" height="131.2" fill="#4a75ca"/>
<rect x="577.92" y="466.9" width="8.23" height="128.5" fill="#6495ed"/>
<rect x="577.92" y="466.9" width="0.8" height="128.5" fill="#7ca5f1"/>
<rect x="577.92" y="466.9" width="8.23" height="1" fill="#5482d8"/>
<rect x="584.95" y="466.9" width="1.2" height="128.5" fill="#4a75ca"/>
<rect x="586.15" y="457.6" width="8.23" height="137.8" fill="#6495ed"/>
<rect x="586.15" y="457.6" width="0.8" height="137.8" fill="#7ca5f1"/>
<rect x="586.15" y="457.6" width="8.23" height="1" fill="#5482d8"/>
<rect x="593.18" y="457.6" width="1.2" height="137.8" fill="#4a75ca"/>
<rect x="594.38" y="459.6" width="8.23" height="135.8" fill="#6495ed"/>
<rect x="594.38" y="459.6" width="0.8" height="135.8" fill="#7ca5f1"/>
<rect x="594.38" y="459.6" width="8.23" height="1" fill="#5482d8"/>
<rect x="601.41" y="459.6" width="1.2" height="135.8" fill="#4a75ca"/>
<rect x="602.61" y="458.6" width="8.23" height="136.8" fill="#6495ed"/>
<rect x="602.61" y="458.6" width="0.8" height="136.8" fill="#7ca5f1"/>
<rect x="602.61" y="458.6" width="8.23" height="1" fill="#5482d8"/>
<rect x="609.65" y="458.6" width="1.2" height="136.8" fill="#4a75ca"/>
<rect x="610.85" y="469.3" width="8.23" height="126.1" fill="#6495ed"/>
<rect x="610.85" y="469.3" width="0.8" height="126.1" fill="#7ca5f1"/>
<rect x="610.85" y="469.3" width="8.23" height="1" fill="#5482d8"/>
<rect x="617.88" y="469.3" width="1.2" height="126.1" fill="#4a75ca"/>
<rect x="619.08" y="450.3" width="8.23" height="145.1" fill="#6495ed"/>
<rect x="619.08" y="450.3" width="0.8" height="145.1" fill="#7ca5f1"/>
<rect x="619.08" y="450.3" width="8.23" height="1" fill="#5482d8"/>
<rect x="626.11" y="450.3" width="1.2" height="145.1" fill="#4a75ca"/>
<rect x="627.31" y="470.5" width="8.23" height="124.9" fill="#6495ed"/>
<rect x="627.31" y="470.5" width="0.8" height="124.9" fill="#7ca5f1"/>
<rect x="627.31" y="470.5" width="8.23" height="1" fill="#5482d8"/>
<rect x="634.34" y="470.5" width="1.2" height="124.9" fill="#4a75ca"/>
<rect x="635.54" y="461.3" width="8.23" height="134.1" fill="#6495ed"/>
<rect x="635.54" y="461.3" width="0.8" height="134.1" fill="#7ca5f1"/>
<rect x="635.54" y="461.3" width="8.23" height="1" fill="#5482d8"/>
<rect x="642.58" y="461.3" width="1.2" height="134.1" fill="#4a75ca"/>
<rect x="643.78" y="463.5" width="8.23" height="131.9" fill="#6495ed"/>
<rect x="643.78" y="463.5" width="0.8" height="131.9" fill="#7ca5f1"/>
<rect x="643.78" y="463.5" width="8.23" height="1" fill="#5482d8"/>
<rect x="650.81" y="463.5" width="1.2" height="131.9" fill="#4a75ca"/>
<rect x="652.01" y="461.3" width="8.23" height="134.1" fill="#6495ed"/>
<rect x="652.01" y="461.3" width="0.8" height="134.1" fill="#7ca5f1"/>
<rect x="652.01" y="461.3" width="8.23" height="1" fill="#5482d8"/>
<rect x="659.04" y="461.3" width="1.2" height="134.1" fill="#4a75ca"/>
<rect x="660.24" y="461.5" width="8.23" height="133.9" fill="#6495ed"/>
<rect x="660.24" y="461.5" width="0.8" height="133.9" fill="#7ca5f1"/>
<rect x="660.24" y="461.5" width="8.23" height="1" fill="#5482d8"/>
<rect x="667.27" y="461.5" width="1.2" height="133.9" fill="#4a75ca"/>
<rect x="668.47" y="470.1" width="8.23" height="125.3" fill="#e0e0e0"/>
<rect x="668.47" y="470.1" width="0.8" height="125.3" fill="#ececec"/>
<rect x="668.47" y="470.1" width="8.23" height="1" fill="#b8b8b8"/>
<rect x="675.51" y="470.1" width="1.2" height="125.3" fill="#a8a8a8"/>
<rect x="676.71" y="482.8" width="8.23" height="112.6" fill="#e0e0e0"/>
<rect x="676.71" y="482.8" width="0.8" height="112.6" fill="#ececec"/>
<rect x="676.71" y="482.8" width="8.23" height="1" fill="#b8b8b8"/>
<rect x="683.74" y="482.8" width="1.2" height="112.6" fill="#a8a8a8"/>
<rect x="684.94" y="497.7" width="8.23" height="97.7" fill="#e0e0e0"/>
<rect x="684.94" y="497.7" width="0.8" height="97.7" fill="#ececec"/>
<rect x="684.94" y="497.7" width="8.23" height="1" fill="#b8b8b8"/>
<rect x="691.97" y="497.7" width="1.2" height="97.7" fill="#a8a8a8"/>
<rect x="693.17" y="505.0" width="8.23" height="90.4" fill="#e0e0e0"/>
<rect x="693.17" y="505.0" width="0.8" height="90.4" fill="#ececec"/>
<rect x="693.17" y="505.0" width="8.23" height="1" fill="#b8b8b8"/>
<rect x="700.20" y="505.0" width="1.2" height="90.4" fill="#a8a8a8"/>
<rect x="701.40" y="509.6" width="8.23" height="85.8" fill="#e0e0e0"/>
<rect x="701.40" y="509.6" width="0.8" height="85.8" fill="#ececec"/>
<rect x="701.40" y="509.6" width="8.23" height="1" fill="#b8b8b8"/>
<rect x="708.43" y="509.6" width="1.2" height="85.8" fill="#a8a8a8"/>
<rect x="709.63" y="511.6" width="8.23" height="83.8" fill="#e0e0e0"/>
<rect x="709.63" y="511.6" width="0.8" height="83.8" fill="#ececec"/>
<rect x="709.63" y="511.6" width="8.23" height="1" fill="#b8b8b8"/>
<rect x="716.67" y="511.6" width="1.2" height="83.8" fill="#a8a8a8"/>
<rect x="717.87" y="512.6" width="8.23" height="82.8" fill="#e0e0e0"/>
<rect x="717.87" y="512.6" width="0.8" height="82.8" fill="#ececec"/>
<rect x="717.87" y="512.6" width="8.23" height="1" fill="#b8b8b8"/>
<rect x="724.90" y="512.6" width="1.2" height="82.8" fill="#a8a8a8"/>
<rect x="726.10" y="513.3" width="8.23" height="82.1" fill="#e0e0e0"/>
<rect x="726.10" y="513.3" width="0.8" height="82.1" fill="#ececec"/>
<rect x="726.10" y="513.3" width="8.23" height="1" fill="#b8b8b8"/>
<rect x="733.13" y="513.3" width="1.2" height="82.1" fill="#a8a8a8"/>
<rect x="734.33" y="517.2" width="8.23" height="78.2" fill="#e0e0e0"/>
<rect x="734.33" y="517.2" width="0.8" height="78.2" fill="#ececec"/>
<rect x="734.33" y="517.2" width="8.23" height="1" fill="#b8b8b8"/>
<rect x="741.36" y="517.2" width="1.2" height="78.2" fill="#a8a8a8"/>
<rect x="742.56" y="515.2" width="8.23" height="80.2" fill="#e0e0e0"/>
<rect x="742.56" y="515.2" width="0.8" height="80.2" fill="#ececec"/>
<rect x="742.56" y="515.2" width="8.23" height="1" fill="#b8b8b8"/>
<rect x="749.60" y="515.2" width="1.2" height="80.2" fill="#a8a8a8"/>
<rect x="750.80" y="505.2" width="8.23" height="90.2" fill="#e0e0e0"/>
<rect x="750.80" y="505.2" width="0.8" height="90.2" fill="#ececec"/>
<rect x="750.80" y="505.2" width="8.23" height="1" fill="#b8b8b8"/>
<rect x="757.83" y="505.2" width="1.2" height="90.2" fill="#a8a8a8"/>
<rect x="759.03" y="502.8" width="8.23" height="92.6" fill="#e0e0e0"/>
<rect x="759.03" y="502.8" width="0.8" height="92.6" fill="#ececec"/>
<rect x="759.03" y="502.8" width="8.23" height="1" fill="#b8b8b8"/>
<rect x="766.06" y="502.8" width="1.2" height="92.6" fill="#a8a8a8"/>
<rect x="767.26" y="505.6" width="8.23" height="89.8" fill="#e0e0e0"/>
<rect x="767.26" y="505.6" width="0.8" height="89.8" fill="#ececec"/>
<rect x="767.26" y="505.6" width="8.23" height="1" fill="#b8b8b8"/>
<rect x="774.29" y="505.6" width="1.2" height="89.8" fill="#a8a8a8"/>
<rect x="775.49" y="504.4" width="8.23" height="91.0" fill="#e0e0e0"/>
<rect x="775.49" y="504.4" width="0.8" height="91.0" fill="#ececec"/>
<rect x="775.49" y="504.4" width="8.23" height="1" fill="#b8b8b8"/>
<rect x="782.52" y="504.4" width="1.2" height="91.0" fill="#a8a8a8"/>
<rect x="783.73" y="513.5" width="8.23" height="81.9" fill="#e0e0e0"/>
<rect x="783.73" y="513.5" width="0.8" height="81.9" fill="#ececec"/>
<rect x="783.73" y="513.5" width="8.23" height="1" fill="#b8b8b8"/>
<rect x="790.76" y="513.5" width="1.2" height="81.9" fill="#a8a8a8"/>
<rect x="791.96" y="514.7" width="8.23" height="80.7" fill="#e0e0e0"/>
<rect x="791.96" y="514.7" width="0.8" height="80.7" fill="#ececec"/>
<rect x="791.96" y="514.7" width="8.23" height="1" fill="#b8b8b8"/>
<rect x="798.99" y="514.7" width="1.2" height="80.7" fill="#a8a8a8"/>
<rect x="800.19" y="507.9" width="8.23" height="87.5" fill="#e0e0e0"/>
<rect x="800.19" y="507.9" width="0.8" height="87.5" fill="#ececec"/>
<rect x="800.19" y="507.9" width="8.23" height="1" fill="#b8b8b8"/>
<rect x="807.22" y="507.9" width="1.2" height="87.5" fill="#a8a8a8"/>
<rect x="808.42" y="507.0" width="8.23" height="88.4" fill="#e0e0e0"/>
<rect x="808.42" y="507.0" width="0.8" height="88.4" fill="#ececec"/>
<rect x="808.42" y="507.0" width="8.23" height="1" fill="#b8b8b8"/>
<rect x="815.45" y="507.0" width="1.2" height="88.4" fill="#a8a8a8"/>
<rect x="816.65" y="509.7" width="8.23" height="85.7" fill="#e0e0e0"/>
<rect x="816.65" y="509.7" width="0.8" height="85.7" fill="#ececec"/>
<rect x="816.65" y="509.7" width="8.23" height="1" fill="#b8b8b8"/>
<rect x="823.69" y="509.7" width="1.2" height="85.7" fill="#a8a8a8"/>
<rect x="824.89" y="514.4" width="8.23" height="81.0" fill="#e0e0e0"/>
<rect x="824.89" y="514.4" width="0.8" height="81.0" fill="#ececec"/>
<rect x="824.89" y="514.4" width="8.23" height="1" fill="#b8b8b8"/>
<rect x="831.92" y="514.4" width="1.2" height="81.0" fill="#a8a8a8"/>
<rect x="833.12" y="516.1" width="8.23" height="79.3" fill="#e0e0e0"/>
<rect x="833.12" y="516.1" width="0.8" height="79.3" fill="#ececec"/>
<rect x="833.12" y="516.1" width="8.23" height="1" fill="#b8b8b8"/>
<rect x="840.15" y="516.1" width="1.2" height="79.3" fill="#a8a8a8"/>
<rect x="841.35" y="519.6" width="8.23" height="75.8" fill="#e0e0e0"/>
<rect x="841.35" y="519.6" width="0.8" height="75.8" fill="#ececec"/>
<rect x="841.35" y="519.6" width="8.23" height="1" fill="#b8b8b8"/>
<rect x="848.38" y="519.6" width="1.2" height="75.8" fill="#a8a8a8"/>
<rect x="849.58" y="519.0" width="8.23" height="76.4" fill="#e0e0e0"/>
<rect x="849.58" y="519.0" width="0.8" height="76.4" fill="#ececec"/>
<rect x="849.58" y="519.0" width="8.23" height="1" fill="#b8b8b8"/>
<rect x="856.62" y="519.0" width="1.2" height="76.4" fill="#a8a8a8"/>
<rect x="857.82" y="525.5" width="8.23" height="69.9" fill="#e0e0e0"/>
<rect x="857.82" y="525.5" width="0.8" height="69.9" fill="#ececec"/>
<rect x="857.82" y="525.5" width="8.23" height="1" fill="#b8b8b8"/>
<rect x="864.85" y="525.5" width="1.2" height="69.9" fill="#a8a8a8"/>
<rect x="866.05" y="524.6" width="8.23" height="70.8" fill="#e0e0e0"/>
<rect x="866.05" y="524.6" width="0.8" height="70.8" fill="#ececec"/>
<rect x="866.05" y="524.6" width="8.23" height="1" fill="#b8b8b8"/>
<rect x="873.08" y="524.6" width="1.2" height="70.8" fill="#a8a8a8"/>
<rect x="874.28" y="520.5" width="8.23" height="74.9" fill="#e0e0e0"/>
<rect x="874.28" y="520.5" width="0.8" height="74.9" fill="#ececec"/>
<rect x="874.28" y="520.5" width="8.23" height="1" fill="#b8b8b8"/>
<rect x="881.31" y="520.5" width="1.2" height="74.9" fill="#a8a8a8"/>
<rect x="882.51" y="524.6" width="8.23" height="70.8" fill="#e0e0e0"/>
<rect x="882.51" y="524.6" width="0.8" height="70.8" fill="#ececec"/>
<rect x="882.51" y="524.6" width="8.23" height="1" fill="#b8b8b8"/>
<rect x="889.54" y="524.6" width="1.2" height="70.8" fill="#a8a8a8"/>
<rect x="890.74" y="522.6" width="8.23" height="72.8" fill="#e0e0e0"/>
<rect x="890.74" y="522.6" width="0.8" height="72.8" fill="#ececec"/>
<rect x="890.74" y="522.6" width="8.23" height="1" fill="#b8b8b8"/>
<rect x="897.78" y="522.6" width="1.2" height="72.8" fill="#a8a8a8"/>
<rect x="898.98" y="524.3" width="8.23" height="71.1" fill="#e0e0e0"/>
<rect x="898.98" y="524.3" width="0.8" height="71.1" fill="#ececec"/>
<rect x="898.98" y="524.3" width="8.23" height="1" fill="#b8b8b8"/>
<rect x="906.01" y="524.3" width="1.2" height="71.1" fill="#a8a8a8"/>
<rect x="907.21" y="524.3" width="8.23" height="71.1" fill="#e0e0e0"/>
<rect x="907.21" y="524.3" width="0.8" height="71.1" fill="#ececec"/>
<rect x="907.21" y="524.3" width="8.23" height="1" fill="#b8b8b8"/>
<rect x="914.24" y="524.3" width="1.2" height="71.1" fill="#a8a8a8"/>
<rect x="915.44" y="522.6" width="8.23" height="72.8" fill="#e0e0e0"/>
<rect x="915.44" y="522.6" width="0.8" height="72.8" fill="#ececec"/>
<rect x="915.44" y="522.6" width="8.23" height="1" fill="#b8b8b8"/>
<rect x="922.47" y="522.6" width="1.2" height="72.8" fill="#a8a8a8"/>
<rect x="923.67" y="525.5" width="8.23" height="69.9" fill="#e0e0e0"/>
<rect x="923.67" y="525.5" width="0.8" height="69.9" fill="#ececec"/>
<rect x="923.67" y="525.5" width="8.23" height="1" fill="#b8b8b8"/>
<rect x="930.71" y="525.5" width="1.2" height="69.9" fill="#a8a8a8"/>
<rect x="931.91" y="524.3" width="8.23" height="71.1" fill="#e0e0e0"/>
<rect x="931.91" y="524.3" width="0.8" height="71.1" fill="#ececec"/>
<rect x="931.91" y="524.3" width="8.23" height="1" fill="#b8b8b8"/>
<rect x="938.94" y="524.3" width="1.2" height="71.1" fill="#a8a8a8"/>
<rect x="940.14" y="533.7" width="8.23" height="61.7" fill="#e0e0e0"/>
<rect x="940.14" y="533.7" width="0.8" height="61.7" fill="#ececec"/>
<rect x="940.14" y="533.7" width="8.23" height="1" fill="#b8b8b8"/>
<rect x="947.17" y="533.7" width="1.2" height="61.7" fill="#a8a8a8"/>
<rect x="948.37" y="545.4" width="8.23" height="50.0" fill="#e0e0e0"/>
<rect x="948.37" y="545.4" width="0.8" height="50.0" fill="#ececec"/>
<rect x="948.37" y="545.4" width="8.23" height="1" fill="#b8b8b8"/>
<rect x="955.40" y="545.4" width="1.2" height="50.0" fill="#a8a8a8"/>
<rect x="956.60" y="546.6" width="8.23" height="48.8" fill="#e0e0e0"/>
<rect x="956.60" y="546.6" width="0.8" height="48.8" fill="#ececec"/>
<rect x="956.60" y="546.6" width="8.23" height="1" fill="#b8b8b8"/>
<rect x="963.64" y="546.6" width="1.2" height="48.8" fill="#a8a8a8"/>
<rect x="964.84" y="546.0" width="8.23" height="49.4" fill="#e0e0e0"/>
<rect x="964.84" y="546.0" width="0.8" height="49.4" fill="#ececec"/>
<rect x="964.84" y="546.0" width="8.23" height="1" fill="#b8b8b8"/>
<rect x="971.87" y="546.0" width="1.2" height="49.4" fill="#a8a8a8"/>
<rect x="973.07" y="546.0" width="8.23" height="49.4" fill="#e0e0e0"/>
<rect x="973.07" y="546.0" width="0.8" height="49.4" fill="#ececec"/>
<rect x="973.07" y="546.0" width="8.23" height="1" fill="#b8b8b8"/>
<rect x="980.10" y="546.0" width="1.2" height="49.4" fill="#a8a8a8"/>
<rect x="661.24" y="462.1" width="6.63" height="133.9" fill="none" stroke="#ff4500" stroke-width="2"/>
<rect x="186.3" y="596.9" width="794.7" height="1.8" fill="#d6d6d6"/>
<rect x="189" y="404.0" width="2" height="191.0" fill="#000"/>
<line x1="177" y1="594.5" x2="189.5" y2="594.5" stroke="#000" stroke-width="1"/>
<text x="175.3" y="598.8" text-anchor="end" class="ax" letter-spacing="-0.4">0</text>
<line x1="177" y1="547.5" x2="189.5" y2="547.5" stroke="#000" stroke-width="1"/>
<text x="175.3" y="551.8" text-anchor="end" class="ax" letter-spacing="-0.4">100</text>
<line x1="177" y1="499.5" x2="189.5" y2="499.5" stroke="#000" stroke-width="1"/>
<text x="175.3" y="503.8" text-anchor="end" class="ax" letter-spacing="-0.4">200</text>
<line x1="177" y1="451.5" x2="189.5" y2="451.5" stroke="#000" stroke-width="1"/>
<text x="175.3" y="455.8" text-anchor="end" class="ax" letter-spacing="-0.4">300</text>
<line x1="177" y1="404.5" x2="189.5" y2="404.5" stroke="#000" stroke-width="1"/>
<text x="175.3" y="408.8" text-anchor="end" class="ax" letter-spacing="-0.4">400</text>
<line x1="190.5" y1="594.8" x2="190.5" y2="600.8" stroke="#000" stroke-width="1"/>
<text x="189.7" y="611" text-anchor="middle" class="ax">0<tspan dx="-0.45">:</tspan><tspan dx="-0.95">00</tspan></text>
<line x1="223.5" y1="594.8" x2="223.5" y2="600.8" stroke="#000" stroke-width="1"/>
<line x1="256.5" y1="594.8" x2="256.5" y2="600.8" stroke="#000" stroke-width="1"/>
<text x="255.7" y="611" text-anchor="middle" class="ax">2<tspan dx="-0.45">:</tspan><tspan dx="-0.95">00</tspan></text>
<line x1="289.5" y1="594.8" x2="289.5" y2="600.8" stroke="#000" stroke-width="1"/>
<line x1="322.5" y1="594.8" x2="322.5" y2="600.8" stroke="#000" stroke-width="1"/>
<text x="321.7" y="611" text-anchor="middle" class="ax">4<tspan dx="-0.45">:</tspan><tspan dx="-0.95">00</tspan></text>
<line x1="355.5" y1="594.8" x2="355.5" y2="600.8" stroke="#000" stroke-width="1"/>
<line x1="388.5" y1="594.8" x2="388.5" y2="600.8" stroke="#000" stroke-width="1"/>
<text x="387.7" y="611" text-anchor="middle" class="ax">6<tspan dx="-0.45">:</tspan><tspan dx="-0.95">00</tspan></text>
<line x1="421.5" y1="594.8" x2="421.5" y2="600.8" stroke="#000" stroke-width="1"/>
<line x1="454.5" y1="594.8" x2="454.5" y2="600.8" stroke="#000" stroke-width="1"/>
<text x="453.7" y="611" text-anchor="middle" class="ax">8<tspan dx="-0.45">:</tspan><tspan dx="-0.95">00</tspan></text>
<line x1="487.5" y1="594.8" x2="487.5" y2="600.8" stroke="#000" stroke-width="1"/>
<line x1="520.5" y1="594.8" x2="520.5" y2="600.8" stroke="#000" stroke-width="1"/>
<text x="519.7" y="611" text-anchor="middle" class="ax">10<tspan dx="-0.45">:</tspan><tspan dx="-0.95">00</tspan></text>
<line x1="553.5" y1="594.8" x2="553.5" y2="600.8" stroke="#000" stroke-width="1"/>
<line x1="586.5" y1="594.8" x2="586.5" y2="600.8" stroke="#000" stroke-width="1"/>
<text x="585.7" y="611" text-anchor="middle" class="ax">12<tspan dx="-0.45">:</tspan><tspan dx="-0.95">00</tspan></text>
<line x1="618.5" y1="594.8" x2="618.5" y2="600.8" stroke="#000" stroke-width="1"/>
<line x1="651.5" y1="594.8" x2="651.5" y2="600.8" stroke="#000" stroke-width="1"/>
<text x="650.7" y="611" text-anchor="middle" class="ax">14<tspan dx="-0.45">:</tspan><tspan dx="-0.95">00</tspan></text>
<line x1="684.5" y1="594.8" x2="684.5" y2="600.8" stroke="#000" stroke-width="1"/>
<line x1="717.5" y1="594.8" x2="717.5" y2="600.8" stroke="#000" stroke-width="1"/>
<text x="716.7" y="611" text-anchor="middle" class="ax">16<tspan dx="-0.45">:</tspan><tspan dx="-0.95">00</tspan></text>
<line x1="750.5" y1="594.8" x2="750.5" y2="600.8" stroke="#000" stroke-width="1"/>
<line x1="783.5" y1="594.8" x2="783.5" y2="600.8" stroke="#000" stroke-width="1"/>
<text x="782.7" y="611" text-anchor="middle" class="ax">18<tspan dx="-0.45">:</tspan><tspan dx="-0.95">00</tspan></text>
<line x1="816.5" y1="594.8" x2="816.5" y2="600.8" stroke="#000" stroke-width="1"/>
<line x1="849.5" y1="594.8" x2="849.5" y2="600.8" stroke="#000" stroke-width="1"/>
<text x="848.7" y="611" text-anchor="middle" class="ax">20<tspan dx="-0.45">:</tspan><tspan dx="-0.95">00</tspan></text>
<line x1="882.5" y1="594.8" x2="882.5" y2="600.8" stroke="#000" stroke-width="1"/>
<line x1="915.5" y1="594.8" x2="915.5" y2="600.8" stroke="#000" stroke-width="1"/>
<text x="914.7" y="611" text-anchor="middle" class="ax">22<tspan dx="-0.45">:</tspan><tspan dx="-0.95">00</tspan></text>
<line x1="948.5" y1="594.8" x2="948.5" y2="600.8" stroke="#000" stroke-width="1"/>
<line x1="981.5" y1="594.8" x2="981.5" y2="600.8" stroke="#000" stroke-width="1"/>
<text x="980.7" y="611" text-anchor="middle" class="ax">24<tspan dx="-0.45">:</tspan><tspan dx="-0.95">00</tspan></text>
<text transform="translate(131,499) rotate(-90)" text-anchor="middle" class="ax">kW</text>
</svg>

<div class="abs" id="info">
  <div class="t l" style="top:5px;color:#6495ed">U1 = 229,44  V</div><div class="t r" style="top:5px;color:#6495ed">0,00°</div>
  <div class="t l" style="top:20px;color:#87cefa">I1 = 175,21  A</div><div class="t r" style="top:20px;color:#87cefa">3,33°</div>
  <div class="t l" style="top:50px;color:#ffa500">U2 = 228,86  V</div><div class="t r" style="top:50px;color:#ffa500">240,20°</div>
  <div class="t l" style="top:65px;color:#ffd000">I2 = 297,66  A</div><div class="t r" style="top:65px;color:#ffd000">241,06°</div>
  <div class="t l" style="top:95px;color:#dc143c">U3 = 227,47  V</div><div class="t r" style="top:95px;color:#dc143c">119,68°</div>
  <div class="t l" style="top:110px;color:#ff4500">I3 = 288,28  A</div><div class="t r" style="top:110px;color:#ff4500">136,41°</div>
  <div class="t l" style="top:140px;color:#808080">P1 = 40,01 kW</div><div class="t r" style="top:140px;color:#808080">0,9955 Ind</div>
  <div class="t l" style="top:155px;color:#808080">P2 = 67,96 kW</div><div class="t r" style="top:155px;color:#808080">0,9976 Ind</div>
  <div class="t l" style="top:170px;color:#808080">P3 = 62,70 kW</div><div class="t r" style="top:170px;color:#808080">0,9562 Ind</div>
  <div class="t l" style="top:200px;color:#5f9ea0">f = 49,998  Hz</div>
</div>

<div class="abs" id="legend">
  <div class="abs" style="left:9px;top:7px;width:24px;height:10px;background:#6495ed"></div>
  <div class="t" style="left:38px">Today</div>
  <div class="abs" style="left:87px;top:7px;width:24px;height:10px;background:#dcdcdc"></div>
  <div class="t" style="left:115px">Yesterday</div>
  <div class="t" style="left:216.5px">Σ = 4,363 MWh</div>
</div>
</body></html>
